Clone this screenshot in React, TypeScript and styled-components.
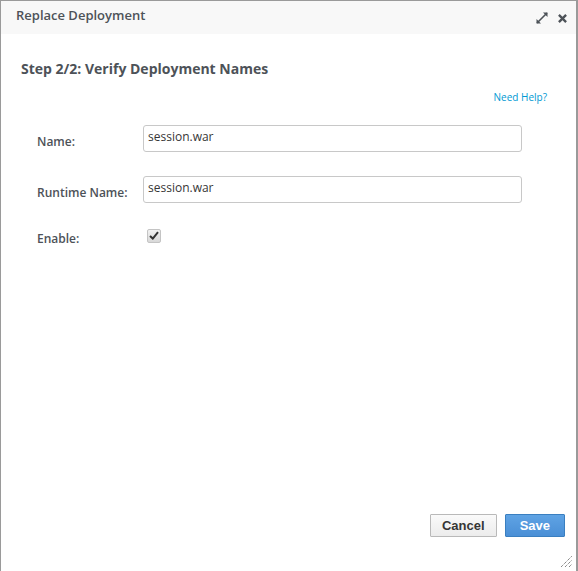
import React from "react";
import styled, { createGlobalStyle } from "styled-components";

const Global = createGlobalStyle`
  html, body { margin: 0; padding: 0; background: #fff; }
  body { font-family: "Open Sans", "Liberation Sans", sans-serif; }
  * { box-sizing: border-box; }
`;

const Dialog = styled.div`
  width: 578px;
  height: 571px;
  border: 1px solid #9a9a9a;
  border-bottom: none;
  border-right-width: 2px;
  display: flex;
  flex-direction: column;
  background: #fff;
  position: relative;
`;

const Header = styled.div`
  height: 33px;
  background: #f8f8f8;
  display: flex;
  align-items: center;
  padding: 0 9px 0 15px;
`;

const Title = styled.div`
  flex: 1;
  font-size: 13px;
  font-weight: 600;
  color: #4d5258;
  margin-top: -6px;
`;

const HeaderIcons = styled.div`
  display: flex;
  gap: 10px;
  align-items: center;
  margin-top: 1px;
`;

const Body = styled.div`
  flex: 1;
  display: flex;
  flex-direction: column;
  padding: 26px 29px 0 20px;
`;

const StepTitle = styled.h2`
  margin: 0;
  font-size: 14px;
  font-weight: 700;
  color: #4d5258;
  line-height: 20px;
  margin-top: -1px;
`;

const HelpRow = styled.div`
  display: flex;
  justify-content: flex-end;
  margin-top: 11px;
`;

const HelpLink = styled.a`
  font-size: 10px;
  color: #0099d3;
  text-decoration: none;
  line-height: 14px;
`;

const Form = styled.div`
  display: flex;
  flex-direction: column;
  gap: 24px;
  margin-top: 21px;
  padding-left: 16px;
`;

const Row = styled.div`
  display: grid;
  grid-template-columns: 106px 379px;
  align-items: center;
`;

const CheckRow = styled(Row)`
  margin-top: -3px;
`;

const Label = styled.label`
  font-size: 12px;
  font-weight: 600;
  color: #4d5258;
  padding-top: 6px;
`;

const Input = styled.div`
  height: 27px;
  border: 1px solid #c8c8c8;
  border-radius: 3px;
  padding: 0 4px;
  font-size: 12px;
  color: #363636;
  line-height: 22px;
  background: #fff;
`;

const CheckWrap = styled.div`
  padding-left: 4px;
`;

const CheckBox = styled.div`
  width: 14px;
  height: 14px;
  border: 1px solid #c4c4c4;
  border-radius: 2px;
  background: linear-gradient(#f2f2f2, #d8d8d8);
  display: flex;
  align-items: center;
  justify-content: center;
`;

const Footer = styled.div`
  display: flex;
  justify-content: flex-end;
  gap: 8px;
  padding: 0 11px 34px 0;
`;

const Button = styled.button<{ $primary?: boolean }>`
  height: 23px;
  padding: 0 ${(p) => (p.$primary ? "14px" : "11px")};
  font-family: "Liberation Sans", Arial, sans-serif;
  font-weight: 700;
  font-size: 13px;
  border-radius: 1px;
  border: 1px solid ${(p) => (p.$primary ? "#3a7fc0" : "#b9b9b9")};
  color: ${(p) => (p.$primary ? "#fff" : "#363636")};
  background: ${(p) =>
    p.$primary ? "linear-gradient(#5fa3e4, #4a8fd6)" : "linear-gradient(#fafafa, #ececec)"};
`;

const Grip = styled.svg`
  position: absolute;
  right: 4px;
  bottom: 4px;
`;

export default function App() {
  return (
    <>
      <Global />
      <Dialog>
        <Header>
          <Title>Replace Deployment</Title>
          <HeaderIcons>
            <svg width="12" height="12" viewBox="0 0 12 12">
              <path d="M1 11 L11 1" stroke="#4d5258" strokeWidth="1.6" />
              <path d="M0.5 11.5 L0.5 7 L5 11.5 Z" fill="#4d5258" />
              <path d="M11.5 0.5 L11.5 5 L7 0.5 Z" fill="#4d5258" />
            </svg>
            <svg width="9" height="9" viewBox="0 0 10 10">
              <path d="M1 1 L9 9 M9 1 L1 9" stroke="#4d5258" strokeWidth="2.6" />
            </svg>
          </HeaderIcons>
        </Header>
        <Body>
          <StepTitle>Step 2/2: Verify Deployment Names</StepTitle>
          <HelpRow>
            <HelpLink href="#">Need Help?</HelpLink>
          </HelpRow>
          <Form>
            <Row>
              <Label>Name:</Label>
              <Input>session.war</Input>
            </Row>
            <Row>
              <Label>Runtime Name:</Label>
              <Input>session.war</Input>
            </Row>
            <CheckRow>
              <Label>Enable:</Label>
              <CheckWrap>
                <CheckBox>
                  <svg width="10" height="9" viewBox="0 0 10 9">
                    <path d="M1 5 L3.8 7.6 L9 1.2" stroke="#333" strokeWidth="2" fill="none" />
                  </svg>
                </CheckBox>
              </CheckWrap>
            </CheckRow>
          </Form>
        </Body>
        <Footer>
          <Button>Cancel</Button>
          <Button $primary>Save</Button>
        </Footer>
        <Grip width="11" height="11" viewBox="0 0 11 11">
          <path d="M0 11 L11 0 M4 11 L11 4 M8 11 L11 8" stroke="#555" strokeWidth="1" strokeDasharray="1 1" />
        </Grip>
      </Dialog>
    </>
  );
}
